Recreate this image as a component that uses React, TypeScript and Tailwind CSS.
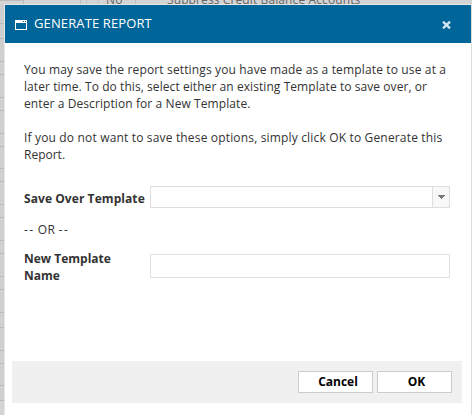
const body = [
  ["You may save the report settings you have made as a template to use at a", "tracking-[0.145px]"],
  ["later time. To do this, select either an existing Template to save over, or", "tracking-[0.07px]"],
  ["enter a Description for a New Template.", "tracking-[0.09px]"],
  ["\u00a0", "tracking-normal"],
  ["If you do not want to save these options, simply click OK to Generate this", "tracking-[0.165px]"],
  ["Report.", "tracking-normal"],
];

// Heights of the grid rows that show beside the dialog
const rowHeights = [20, 15, 23, 13, 23, 13, 23, 13, 22, 13, 23, 13, 23, 13, 23, 13, 23, 15, 23, 13, 22, 15];

function PageBehind() {
  return (
    <div className="h-[415px] w-[472px] overflow-hidden bg-[#d4d4d4]">
      <div className="flex h-1 overflow-hidden text-[#666]">
        <div className="w-6 border-r border-t border-[#bdbdbd]" />
        <div className="w-[57px] border-r border-[#bdbdbd]" />
        <div className="w-[6px] border-r border-[#c8c8c8]" />
        <div className="w-[12px] border-r border-[#c8c8c8]" />
        <div className="w-[37px] border-r border-[#bdbdbd] pl-[7px]">
          <span className="-mt-[7px] block leading-[14px] tracking-[0.3px]">No</span>
        </div>
        <div className="pl-[31px]">
          <span className="-mt-[7px] block whitespace-nowrap leading-[14px] tracking-[0.11px]">Suppress Credit Balance Accounts</span>
        </div>
      </div>
      <div className="flex w-[4px] flex-col bg-[#cfcfcf]">
        {rowHeights.map((height, i) => (
          <div key={i} className="shrink-0 border-b border-[#b9b9b9]" style={{ height }} />
        ))}
      </div>
    </div>
  );
}

export default function App() {
  return (
    <div className="relative h-[415px] w-[472px] overflow-hidden font-['Open_Sans','Noto_Sans',sans-serif] text-[12px] text-[#333]">
      <PageBehind />
      <div className="absolute left-[4px] top-[4px] flex h-[411px] w-[468px] flex-col border-x border-t border-l-[#e6e6e6] border-r-[#dedede] border-t-[#e6e6e6] bg-white">
        <header className="flex h-[38px] shrink-0 items-center bg-[#006699] pl-[10px] pr-[20px] text-white">
          <svg className="mt-px h-[10px] w-[12px]" viewBox="0 0 12 10" shapeRendering="crispEdges">
            <path fill="#fff" fillRule="evenodd" d="M0 0h12v10H0zM1 3v6h10V3zM8 1v1h1V1zM10 1v1h1V1z" />
          </svg>
          <h1 className="ml-[7px] flex-1 whitespace-nowrap text-[13px] tracking-[0.12px]">GENERATE REPORT</h1>
          <svg className="mt-px h-2 w-[9px]" viewBox="0 0 9 8">
            <path stroke="#d5e6ef" strokeWidth="2.4" d="M1 .7l7 6.6M8 .7L1 7.3" />
          </svg>
        </header>
        <div className="flex-1 px-[19px] pt-[18px]">
          {body.map(([t, c], i) => (
            <p key={i} className="h-[17px] leading-[17px]"><span className={`whitespace-nowrap ${c}`}>{t}</span></p>
          ))}
          <div className="mt-[23px] flex">
            <label className="w-[126px] shrink-0 whitespace-nowrap pt-[4px] font-bold leading-[17px] tracking-[0.07px]">Save Over Template</label>
            <div className="flex h-[22px] w-[300px] border border-[#dedede] bg-white">
              <div className="flex-1" />
              <div className="flex w-[17px] items-center justify-center border-l border-[#dedede] bg-[#f8f8f8]">
                <svg className="h-1 w-[7px]" viewBox="0 0 7 4" shapeRendering="crispEdges">
                  <path fill="#777" d="M0 0h7v1H6v1H5v1H4v1H3V3H2V2H1V1H0z" />
                </svg>
              </div>
            </div>
          </div>
          <p className="mt-[13px] leading-[17px]"><span className="tracking-[1.5px]">--</span> <span className="tracking-[0.4px]">OR</span> <span className="tracking-[1.5px]">--</span></p>
          <div className="mt-[12px] flex">
            <label className="w-[126px] shrink-0 font-bold leading-[17px]">New Template<br />Name</label>
            <div className="mt-[4px] h-[24px] w-[300px] border border-[#e1e1e1]" />
          </div>
        </div>
        <footer className="mb-[12px] ml-[7px] flex h-[42px] w-[450px] shrink-0 items-center justify-end gap-[4px] bg-[#f0f0f0] pr-[10px]">
          <button className="h-[22px] w-[75px] border border-[#ccc] bg-white pl-[5px] font-bold text-black">Cancel</button>
          <button className="h-[22px] w-[75px] border border-[#ccc] bg-white pl-[4px] font-bold text-black">OK</button>
        </footer>
      </div>
    </div>
  );
}
